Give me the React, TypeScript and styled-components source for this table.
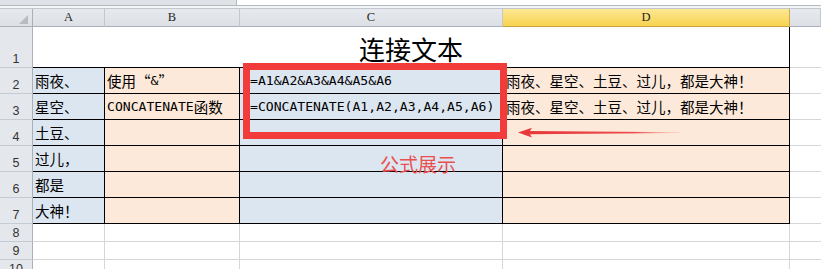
import React from 'react';
import styled, { createGlobalStyle } from 'styled-components';

const GlobalStyle = createGlobalStyle`
  html, body { margin: 0; padding: 0; background: #ffffff; }
  body {
    width: 821px;
    height: 269px;
    overflow: hidden;
    font-family: "Noto Sans CJK SC", sans-serif;
  }
`;

const BLUE = '#dce6f1';
const PEACH = '#fde9d9';
const GRID = '#d6d6d6';

const Window = styled.div`
  position: relative;
  width: 821px;
  height: 269px;
  overflow: hidden;
  background: #ffffff;
`;

const FormulaStrip = styled.div`
  display: flex;
  height: 6px;
  box-sizing: border-box;
  border-bottom: 1px solid #b4b9c0;
`;

const NameBox = styled.div`
  width: 237px;
  box-sizing: border-box;
  background: #dfe3e8;
  border-right: 1px solid #b4b9c0;
`;

const FormulaField = styled.div`
  flex: 1;
  background: #ffffff;
`;

const Splitter = styled.div`
  height: 3px;
  box-sizing: border-box;
  background: #f4f5f7;
  border-bottom: 1px solid #c3c7cd;
`;

const Sheet = styled.div`
  display: grid;
  grid-template-columns: 33px 72px 135px 263px 287px 1fr;
  grid-template-rows: 18px 41px repeat(6, 26px) repeat(3, 18px);
`;

const ColHead = styled.div<{ $active?: boolean }>`
  box-sizing: border-box;
  display: flex;
  align-items: center;
  justify-content: center;
  background: ${(p) =>
    p.$active
      ? 'linear-gradient(#fde794, #f8d34f)'
      : 'linear-gradient(#e6e9ed, #dde1e6)'};
  border-right: 1px solid ${(p) => (p.$active ? '#c9aa50' : '#c3c8ce')};
  border-bottom: 1px solid ${(p) => (p.$active ? '#c9a43e' : '#a9b0b9')};
  font-family: "Liberation Serif", serif;
  font-size: 12.5px;
  color: #262626;
`;

const CornerHead = styled(ColHead)`
  position: relative;
  border-right-color: #a9b0b9;
`;

const CornerMark = styled.svg`
  position: absolute;
  right: 4px;
  bottom: 2px;
`;

const RowHead = styled.div`
  box-sizing: border-box;
  display: flex;
  align-items: flex-end;
  justify-content: center;
  padding-bottom: 1px;
  background: #e4e8ed;
  border-right: 1px solid #a9b0b9;
  border-bottom: 1px solid #c6cbd2;
  font-family: "Liberation Sans", sans-serif;
  font-size: 12.5px;
  line-height: 14px;
  color: #333333;
`;

type Edge = 'box' | 'grid' | 'open';

const Cell = styled.div<{ $fill?: string; $edge: Edge; $indent?: number }>`
  box-sizing: border-box;
  display: flex;
  align-items: flex-end;
  padding: 0 0 3px ${(p) => p.$indent ?? 2}px;
  background: ${(p) => p.$fill ?? '#ffffff'};
  border-right: ${(p) =>
    p.$edge === 'open' ? 'none' : `1px solid ${p.$edge === 'box' ? '#000' : GRID}`};
  border-bottom: 1px solid ${(p) => (p.$edge === 'box' ? '#000' : GRID)};
  font-size: 14.5px;
  line-height: 18px;
  color: #000000;
  white-space: nowrap;
  min-width: 0;
`;

const TitleCell = styled.div`
  grid-column: span 4;
  box-sizing: border-box;
  display: flex;
  justify-content: center;
  padding-top: 9px;
  border-right: 1px solid #000;
  border-bottom: 1px solid #000;
  font-size: 26px;
  line-height: 26px;
  color: #000000;
`;

const Ascii = styled.span`
  font-family: "DejaVu Sans Mono", monospace;
  font-size: 13.1px;
`;

const WideMark = styled.span<{ $side: 'left' | 'right' }>`
  display: inline-block;
  width: 14.5px;
  text-align: ${(p) => p.$side};
`;

const Highlight = styled.div`
  position: absolute;
  left: 243px;
  top: 63px;
  width: 264px;
  height: 76px;
  box-sizing: border-box;
  border: 7px solid #f23b3b;
`;

const Pointer = styled.svg`
  position: absolute;
  left: 514px;
  top: 124px;
`;

const Note = styled.div`
  position: absolute;
  left: 380px;
  top: 154px;
  font-size: 19px;
  line-height: 19px;
  color: #e8504f;
`;

// Splits a cell's text into half-width (monospace) runs and full-width runs.
function Rich({ text }: { text: string }) {
  const parts = text.split(/([\x20-\x7e]+|[“”])/).filter(Boolean);
  return (
    <>
      {parts.map((part, i) => {
        if (part === '“') return <WideMark key={i} $side="right">“</WideMark>;
        if (part === '”') return <WideMark key={i} $side="left">”</WideMark>;
        if (/^[\x20-\x7e]+$/.test(part)) return <Ascii key={i}>{part}</Ascii>;
        return <span key={i}>{part}</span>;
      })}
    </>
  );
}

const RESULT = '雨夜、星空、土豆、过儿，都是大神！';

const dataRows: { a: string; b?: string; c?: string; d?: string }[] = [
  { a: '雨夜、', b: '使用“&”', c: '=A1&A2&A3&A4&A5&A6', d: RESULT },
  { a: '星空、', b: 'CONCATENATE函数', c: '=CONCATENATE(A1,A2,A3,A4,A5,A6)', d: RESULT },
  { a: '土豆、' },
  { a: '过儿，' },
  { a: '都是' },
  { a: '大神！' },
];

export default function App() {
  return (
    <>
      <GlobalStyle />
      <Window>
        <FormulaStrip>
          <NameBox />
          <FormulaField />
        </FormulaStrip>
        <Splitter />
        <Sheet>
          <CornerHead>
            <CornerMark width="9" height="9" viewBox="0 0 9 9">
              <polygon points="9,0 9,9 0,9" fill="#b7bcc3" />
            </CornerMark>
          </CornerHead>
          <ColHead>A</ColHead>
          <ColHead>B</ColHead>
          <ColHead>C</ColHead>
          <ColHead $active>D</ColHead>
          <ColHead />

          <RowHead>1</RowHead>
          <TitleCell>连接文本</TitleCell>
          <Cell $edge="open" />

          {dataRows.map((r, i) => (
            <React.Fragment key={i}>
              <RowHead>{i + 2}</RowHead>
              <Cell $edge="box" $fill={BLUE}>
                <Rich text={r.a} />
              </Cell>
              <Cell $edge="box" $fill={PEACH} $indent={2}>
                {r.b && <Rich text={r.b} />}
              </Cell>
              <Cell $edge="box" $fill={BLUE} $indent={10}>
                {r.c && <Rich text={r.c} />}
              </Cell>
              <Cell $edge="box" $fill={PEACH} $indent={3}>
                {r.d && <Rich text={r.d} />}
              </Cell>
              <Cell $edge="open" />
            </React.Fragment>
          ))}

          {[8, 9, 10].map((n) => (
            <React.Fragment key={n}>
              <RowHead>{n}</RowHead>
              <Cell $edge="grid" />
              <Cell $edge="grid" />
              <Cell $edge="grid" />
              <Cell $edge="grid" />
              <Cell $edge="open" />
            </React.Fragment>
          ))}
        </Sheet>

        <Highlight />
        <Pointer width="172" height="18" viewBox="0 0 172 18">
          <defs>
            <linearGradient id="shaft" x1="0" x2="1" y1="0" y2="0">
              <stop offset="0" stopColor="#e8383a" />
              <stop offset="0.7" stopColor="#ec4a4c" />
              <stop offset="1" stopColor="#f4a0a0" stopOpacity="0.3" />
            </linearGradient>
          </defs>
          <polygon points="14,7 166,8.2 166,9 14,10.2" fill="url(#shaft)" />
          <polygon points="4,8.6 18,3.8 15,8.6 18,13.4" fill="#e8383a" />
        </Pointer>
        <Note>公式展示</Note>
      </Window>
    </>
  );
}
